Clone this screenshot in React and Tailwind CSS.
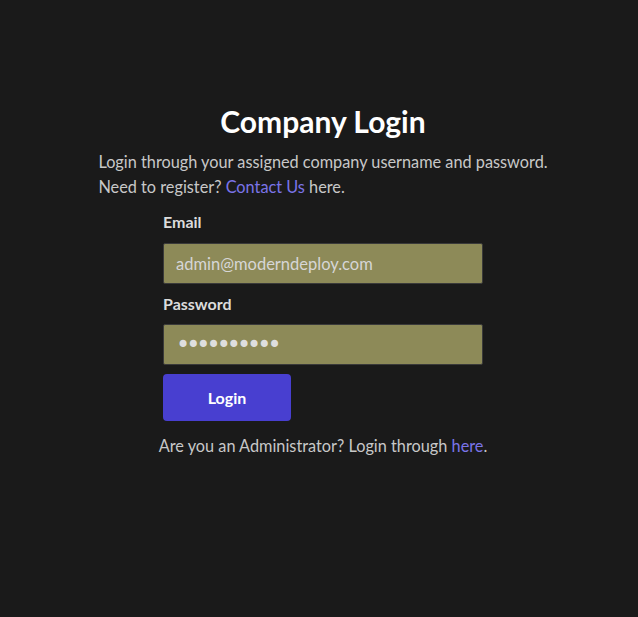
import React from "react";

const App = () => {
  return (
    <div className="min-h-screen w-full bg-[#1a1a1a] font-['Lato','Noto_Sans',sans-serif] text-[#c8c8c8]">
      <div className="flex flex-col items-center pt-[101px] pl-2">
        <h1 className="text-[30px] font-bold text-white leading-[40px]">Company Login</h1>
        <div className="mt-[8px] text-[16.3px] leading-[25px]">
          <p>Login through your assigned company username and password.</p>
          <p>
            Need to register? <a href="#" className="text-[#7b74e8]">Contact Us</a> here.
          </p>
        </div>

        <form className="mt-[11px] flex w-[320px] flex-col" onSubmit={(e) => e.preventDefault()}>
          <label className="text-[16px] font-bold leading-[24px] text-[#dcdcdc]">Email</label>
          <input
            type="email"
            defaultValue="admin@moderndeploy.com"
            className="mt-[9px] h-[41px] w-full rounded-[2px] border border-[#3a3a3a] bg-[#8d8a58] px-3 text-[16.5px] text-[#d6d6d6] outline-none"
          />
          <label className="mt-[8px] text-[16px] font-bold leading-[24px] text-[#dcdcdc]">Password</label>
          <input
            type="password"
            defaultValue="password12"
            className="mt-[8px] h-[41px] w-full rounded-[2px] border border-[#3a3a3a] bg-[#8d8a58] px-3 font-['DejaVu_Sans',sans-serif] text-[24px] tracking-[-4px] text-[#dedede] outline-none"
          />
          <button
            type="submit"
            className="mt-[9px] h-[47px] w-[128px] rounded-[4px] bg-[#483fd0] text-[16px] font-bold text-white"
          >
            Login
          </button>
        </form>

        <p className="mt-[13px] text-[16.3px] leading-[24px]">
          Are you an Administrator? Login through <a href="#" className="text-[#7b74e8]">here</a>.
        </p>
      </div>
    </div>
  );
};

export default App;
